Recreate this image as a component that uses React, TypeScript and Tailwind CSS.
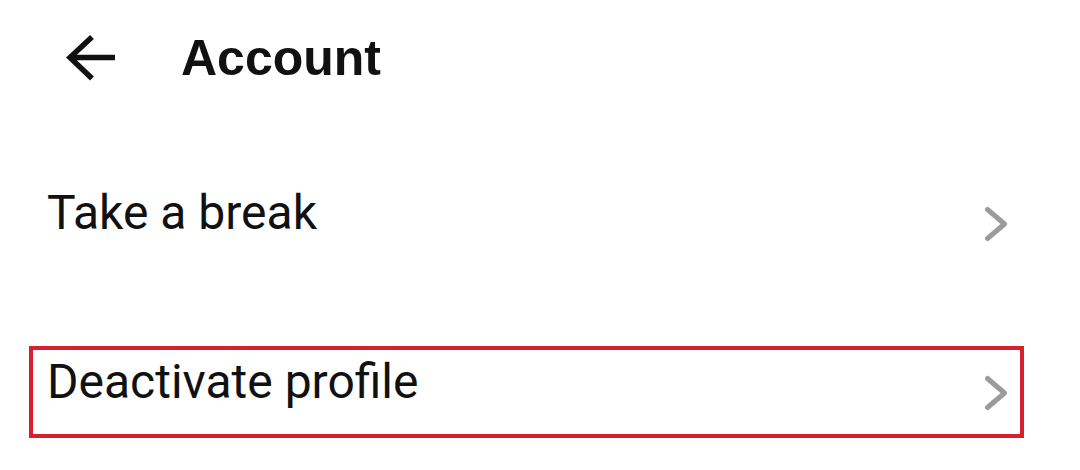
import React from "react";

function Chevron() {
  return (
    <svg width="24" height="36" viewBox="0 0 24 36" className="mt-[21px] shrink-0" fill="none">
      <polyline points="3.5,3.5 20.5,18 3.5,32.5" stroke="#9b9b9b" strokeWidth="5" strokeLinecap="round" strokeLinejoin="round" />
    </svg>
  );
}

function Row({ label, highlighted }: { label: string; highlighted?: boolean }) {
  return (
    <div
      className={`ml-[29px] flex h-[92px] w-[995px] items-start justify-between border-4 pl-[14px] pr-[12px] pt-[4px] ${
        highlighted ? "border-[#d71f2d]" : "border-transparent"
      }`}
    >
      <span className="text-[48px] leading-[56px] text-[#111]" style={{ fontFamily: "Roboto, 'Noto Sans', sans-serif" }}>
        {label}
      </span>
      <Chevron />
    </div>
  );
}

export default function App() {
  return (
    <div className="h-[470px] w-[1080px] overflow-hidden bg-white">
      <div className="mt-[28px] flex h-[60px] items-center pl-[65px]">
        <svg width="50" height="48" viewBox="0 0 50 48" fill="none" className="shrink-0">
          <path d="M50 23.5H6" stroke="#111" strokeWidth="5.5" strokeLinecap="butt" />
          <path d="M27 3L5 23.5l22 21" stroke="#111" strokeWidth="5.5" strokeLinecap="butt" strokeLinejoin="miter" />
        </svg>
        <span
          className="ml-[66px] text-[50px] font-bold leading-[60px] text-[#111]"
          style={{ fontFamily: "'Liberation Sans', Arial, sans-serif" }}
        >
          Account
        </span>
      </div>
      <div className="mt-[89px] flex flex-col gap-[77px]">
        <Row label="Take a break" />
        <Row label="Deactivate profile" highlighted />
      </div>
    </div>
  );
}
